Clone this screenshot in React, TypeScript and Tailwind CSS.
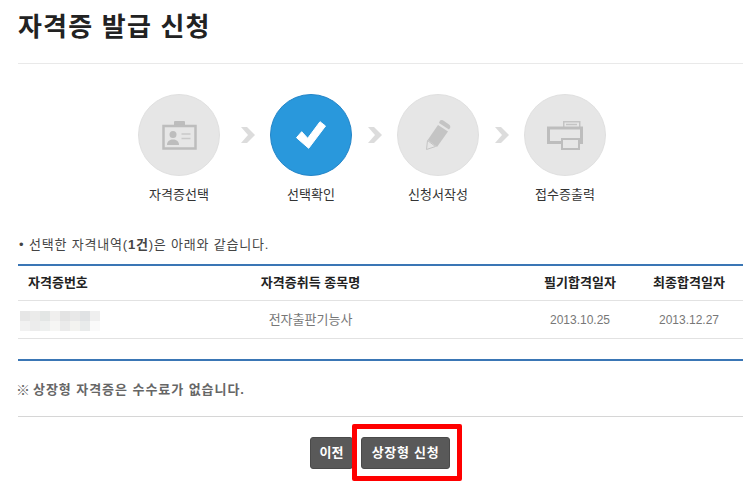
import React from 'react';

const font = { fontFamily: '"Liberation Sans", "Noto Sans CJK KR", sans-serif' };

const CardIcon = () => (
  <svg width="35" height="29" viewBox="0 0 35 29">
    <rect x="12" y="0" width="11" height="5" rx="1" fill="#bdbdbd" />
    <rect x="1.500" y="5" width="32" height="22.500" fill="none" stroke="#bdbdbd" strokeWidth="2.500" />
    <circle cx="11" cy="13.500" r="3.500" fill="#bdbdbd" />
    <path d="M5 24c0-4 3-5.500 6-5.500s6 1.500 6 5.500z" fill="#bdbdbd" />
    <path d="M19.500 13h9M19.500 17.500h9" stroke="#c9c9c9" strokeWidth="1.500" />
  </svg>
);

const CheckIcon = () => (
  <svg width="30" height="28" viewBox="0 0 30 28">
    <path d="M0.500 16.700L5.700 10.700L11.700 17.300L24 0.700L29.500 5L12.700 27.300z" fill="#fff" stroke="#fff" strokeWidth="1" strokeLinejoin="round" />
  </svg>
);

const PencilIcon = () => (
  <svg width="25" height="30" viewBox="0 0 25 30">
    <path d="M14 0.500q2-1 4 .5l5 3.500q2 1.500 1 3.500l-1 1.500-10-6.500z" fill="#c4c4c4" />
    <path d="M12 5l10 6.500L11 27 1.700 20z" fill="#c4c4c4" />
    <path d="M1.500 20.500l8 6-9 3z" fill="#e6e6e6" stroke="#c4c4c4" strokeWidth="1" />
  </svg>
);

const PrinterIcon = () => (
  <svg width="36" height="29" viewBox="0 0 36 29">
    <rect x="16.750" y="0.750" width="16" height="6" fill="none" stroke="#c4c4c4" strokeWidth="1.500" />
    <path d="M19 3.500h11" stroke="#c4c4c4" strokeWidth="1.500" />
    <rect x="1.500" y="7" width="33" height="14.500" fill="none" stroke="#bdbdbd" strokeWidth="3" />
    <rect x="15" y="18" width="17" height="10" fill="#e6e6e6" stroke="#bdbdbd" strokeWidth="2" />
  </svg>
);

const Chevron = () => (
  <svg width="14" height="16" viewBox="0 0 14 16" className="mx-auto">
    <path d="M0 0h6l8 8-8 8H0l7-8z" fill="#dcdcdc" />
  </svg>
);

function Step({ label, active, children }: { label: string; active?: boolean; children: React.ReactNode }) {
  return (
    <div className="flex w-[82px] flex-col items-center">
      <div
        className={
          active
            ? 'flex h-[82px] w-[82px] items-center justify-center rounded-full border border-[#2485c8] bg-[#2998dc]'
            : 'flex h-[82px] w-[82px] items-center justify-center rounded-full border border-[#e0e0e0] bg-[#e6e6e6]'
        }
      >
        {children}
      </div>
      <span className="mt-[10px] whitespace-nowrap text-[13px] leading-[18px] text-[#333]">{label}</span>
    </div>
  );
}

const mosaic = [
  ['#e6e6e6', '#ebebea', '#e3e6e5', '#f0efee', '#e3e3e3', '#e8e8e8', '#e0e2e4', '#efefef'],
  ['#f1f1f1', '#ececec', '#eef0ef', '#f6f6f4', '#ebebeb', '#f3f3f0', '#e9ebeb', '#fafafa'],
];

export default function App() {
  return (
    <div className="h-[491px] w-[751px] overflow-hidden bg-white px-[18px] text-[#333]" style={font}>
      <div className="relative h-[491px] w-[725px]">
        <h1 className="h-[64px] border-b border-[#e9e9e9] pt-[9px] text-[26px] font-bold leading-[36px] tracking-[1.2px] text-[#222]">
          자격증 발급 신청
        </h1>

        <div className="mt-[30px] flex items-start pl-[120px]">
          <Step label="자격증선택"><CardIcon /></Step>
          <div className="mt-[33px] w-[50px] pl-[5px]"><Chevron /></div>
          <Step label="선택확인" active><CheckIcon /></Step>
          <div className="mt-[33px] w-[45px]"><Chevron /></div>
          <Step label="신청서작성"><PencilIcon /></Step>
          <div className="mt-[33px] w-[45px]"><Chevron /></div>
          <Step label="접수증출력"><PrinterIcon /></Step>
        </div>

        <p className="mt-[32px] flex text-[13px] leading-[18px] tracking-[0.8px] text-[#444]">
          <span className="w-[11px] pl-[1px]">•</span>
          <span>선택한 자격내역(<b>1건</b>)은 아래와 같습니다.</span>
        </p>

        <div className="mt-[10px] h-[97px] border-y-2 border-[#3a76b5]">
          <div className="grid h-[35px] grid-cols-[100px_385px_135px_105px] items-center border-b border-[#e2e2e2] text-[13px] font-bold text-[#222]">
            <span className="pl-[10px]">자격증번호</span>
            <span className="text-center">자격증취득 종목명</span>
            <span className="pl-[19px] text-center">필기합격일자</span>
            <span className="pr-[3px] text-center">최종합격일자</span>
          </div>
          <div className="grid h-[38px] grid-cols-[100px_385px_135px_105px] items-center border-b border-[#e2e2e2] text-[13px] text-[#777]">
            <div className="ml-[2px] mt-[2px] grid w-[80px] grid-cols-[repeat(8,10px)] grid-rows-[10px_10px]">
              {mosaic.flat().map((c, i) => (
                <div key={i} style={{ backgroundColor: c }} />
              ))}
            </div>
            <span className="text-center">전자출판기능사</span>
            <span className="pl-[19px] text-center text-[12px]">2013.10.25</span>
            <span className="pr-[3px] text-center text-[12px]">2013.12.27</span>
          </div>
        </div>

        <p className="mt-[20px] flex text-[13px] font-bold leading-[18px] tracking-[0.95px] text-[#666]">
          <span className="-ml-[2px] w-[17px] text-[14px]">※</span>
          <span>상장형 자격증은 수수료가 없습니다.</span>
        </p>

        <div className="mt-[17px] flex justify-center gap-[8px] border-t border-[#d6d6d6] pr-[1px] pt-[20px]">
          <button className="h-[32px] w-[43px] rounded-[3px] border border-[#4a4a4a] bg-[#595959] text-[13px] font-bold text-white">이전</button>
          <button className="h-[32px] w-[89px] rounded-[3px] border border-[#4a4a4a] bg-[#595959] text-[13px] font-bold tracking-[0.7px] text-white">상장형 신청</button>
        </div>

        <div className="absolute left-[334px] top-[424px] h-[57px] w-[110px] rounded-[2px] border-[5px] border-[#ff0000]" />
      </div>
    </div>
  );
}
